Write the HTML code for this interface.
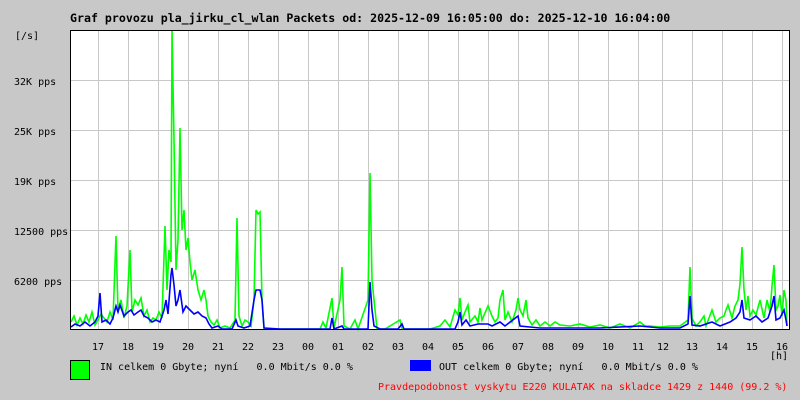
<!DOCTYPE html>
<html><head><meta charset="utf-8"><style>
body{margin:0;background:#c8c8c8;width:800px;height:400px;overflow:hidden;position:relative;font-family:"DejaVu Sans Mono","Liberation Mono",monospace;font-size:10px;color:#000}
.t{position:absolute;white-space:pre;line-height:12px}
</style></head><body>
<div class="t" style="left:70px;top:12px;font-weight:bold;font-size:11.6px">Graf provozu pla_jirku_cl_wlan Packets od: 2025-12-09 16:05:00 do: 2025-12-10 16:04:00</div>
<div class="t" style="left:15px;top:31px">[/s]</div>
<div class="t" style="left:14px;top:77px">32K pps</div>
<div class="t" style="left:14px;top:127px">25K pps</div>
<div class="t" style="left:14px;top:177px">19K pps</div>
<div class="t" style="left:14px;top:227px">12500 pps</div>
<div class="t" style="left:14px;top:277px">6200 pps</div>
<svg style="position:absolute;left:0;top:0" width="800" height="400">
<rect x="70" y="30" width="720" height="300" fill="#fff"/>
<g stroke="#c8c8c8" stroke-width="1">
<path d="M70 80.5H790M70 130.5H790M70 180.5H790M70 230.5H790M70 280.5H790"/>
<path d="M98.5 30V330M128.5 30V330M158.5 30V330M188.5 30V330M218.5 30V330M248.5 30V330M278.5 30V330M308.5 30V330M338.5 30V330M368.5 30V330M398.5 30V330M428.5 30V330M458.5 30V330M488.5 30V330M518.5 30V330M548.5 30V330M578.5 30V330M608.5 30V330M638.5 30V330M662.5 30V330M692.5 30V330M722.5 30V330M752.5 30V330M782.5 30V330"/>
</g>
<path fill="none" stroke="#00ff00" stroke-width="1.6" d="M71 322L74 316L77 325L80 318L83 324L86 315L89 322L92 312L95 325L98 320L101 314L104 318L107 322L110 312L113 320L116 236L118 310L121 300L124 318L127 306L130 250L132 312L135 300L138 305L141 298L144 316L147 310L150 322L153 318L156 320L159 312L162 318L165 226L167 290L169 250L171 262L172 30L174 140L176 270L178 240L180 128L182 230L184 210L186 250L188 238L190 262L192 280L195 270L198 290L201 300L204 290L206 300L208 316L211 322L214 325L217 320L220 328L225 326L230 328L235 320L237 218L239 316L242 326L245 320L248 322L251 326L254 300L256 210L258 214L260 212L262 300L264 328L270 329L300 329L320 329L323 322L326 328L332 298L334 328L340 300L342 267L344 326L350 329L355 320L358 329L368 300L370 173L372 280L374 300L377 329L385 329L400 320L402 329L430 329L440 326L445 320L450 327L455 310L458 315L460 298L462 320L465 312L468 305L470 322L475 316L478 322L480 308L482 320L488 306L492 316L495 322L498 318L500 300L503 290L505 320L508 312L512 322L516 310L518 298L520 310L523 316L526 300L528 318L532 325L536 320L540 326L545 322L550 326L555 322L560 325L570 326L580 324L590 327L600 325L610 328L620 324L630 328L640 322L645 326L650 326L660 327L670 326L680 326L688 320L690 267L692 318L696 326L700 322L704 316L706 326L712 310L716 322L720 318L724 316L726 310L728 305L732 318L735 306L738 300L740 284L742 247L744 290L746 310L748 296L750 316L753 310L756 315L760 300L764 318L767 300L770 312L772 286L774 265L776 310L778 306L780 295L782 316L784 290L786 300L787 326"/>
<path fill="none" stroke="#0000ff" stroke-width="1.6" d="M71 327L75 324L80 326L85 322L90 326L95 322L98 316L100 293L102 322L106 320L110 324L113 318L116 306L118 312L120 305L124 316L128 312L131 310L134 315L138 312L141 310L144 316L148 318L152 322L156 320L160 322L164 310L166 300L168 314L171 275L172 268L174 285L176 306L178 300L180 290L183 312L186 306L190 310L194 314L198 312L202 316L206 318L209 324L212 328L218 326L222 329L232 329L236 320L238 326L244 328L250 326L254 300L256 290L260 290L262 300L264 328L280 329L330 329L332 318L334 329L342 326L344 329L368 329L370 282L372 310L374 326L380 329L398 329L402 324L404 329L455 329L458 322L460 312L462 325L466 320L470 326L478 324L488 324L492 326L500 322L505 326L518 316L520 326L540 328L600 328L640 326L660 328L680 328L688 324L690 296L692 325L700 326L712 322L720 326L730 322L736 318L740 312L742 300L744 318L750 320L756 316L762 322L768 318L772 306L774 296L776 320L780 318L784 310L786 320L787 326"/>
<rect x="70.5" y="30.5" width="719" height="299" fill="none" stroke="#000"/>
<rect x="70.5" y="360.5" width="19" height="19" fill="#00ff00" stroke="#000"/>
<rect x="410" y="360" width="21" height="11" fill="#0000ff"/>
</svg>
<div class="t" style="left:92px;top:342px">17</div>
<div class="t" style="left:122px;top:342px">18</div>
<div class="t" style="left:152px;top:342px">19</div>
<div class="t" style="left:182px;top:342px">20</div>
<div class="t" style="left:212px;top:342px">21</div>
<div class="t" style="left:242px;top:342px">22</div>
<div class="t" style="left:272px;top:342px">23</div>
<div class="t" style="left:302px;top:342px">00</div>
<div class="t" style="left:332px;top:342px">01</div>
<div class="t" style="left:362px;top:342px">02</div>
<div class="t" style="left:392px;top:342px">03</div>
<div class="t" style="left:422px;top:342px">04</div>
<div class="t" style="left:452px;top:342px">05</div>
<div class="t" style="left:482px;top:342px">06</div>
<div class="t" style="left:512px;top:342px">07</div>
<div class="t" style="left:542px;top:342px">08</div>
<div class="t" style="left:572px;top:342px">09</div>
<div class="t" style="left:602px;top:342px">10</div>
<div class="t" style="left:632px;top:342px">11</div>
<div class="t" style="left:657px;top:342px">12</div>
<div class="t" style="left:686px;top:342px">13</div>
<div class="t" style="left:716px;top:342px">14</div>
<div class="t" style="left:746px;top:342px">15</div>
<div class="t" style="left:776px;top:342px">16</div>
<div class="t" style="left:770px;top:351px">[h]</div>
<div class="t" style="left:100px;top:362px">IN celkem 0 Gbyte; nyní   0.0 Mbit/s 0.0 %</div>
<div class="t" style="left:439px;top:362px">OUT celkem 0 Gbyte; nyní   0.0 Mbit/s 0.0 %</div>
<div class="t" style="left:378px;top:382px;color:#ff0000">Pravdepodobnost vyskytu E220 KULATAK na skladce 1429 z 1440 (99.2 %)</div>
</body></html>
